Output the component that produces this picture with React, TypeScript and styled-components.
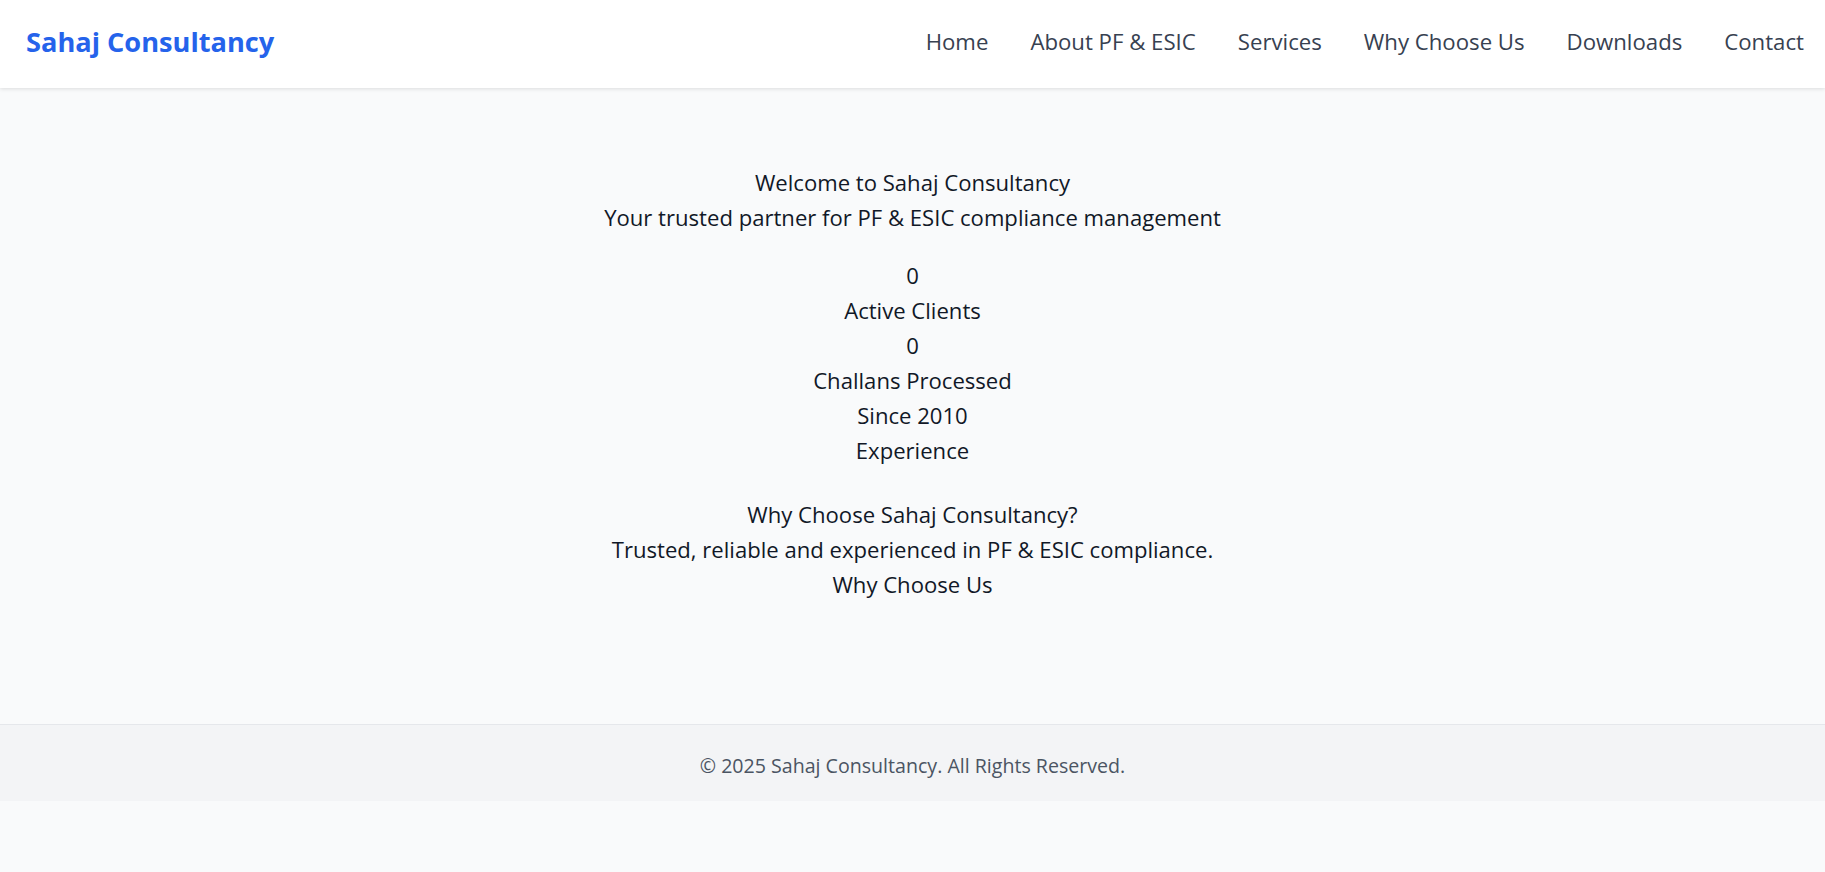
import React from 'react'
import styled, { createGlobalStyle } from 'styled-components'

const GlobalStyle = createGlobalStyle`
  html, body {
    margin: 0;
    padding: 0;
    background-color: #f9fafb;
    font-family: "Open Sans", "Noto Sans", sans-serif;
    color: #111827;
  }
  * {
    box-sizing: border-box;
  }
`

const navLinks = ['Home', 'About PF & ESIC', 'Services', 'Why Choose Us', 'Downloads', 'Contact']

const stats = [
  { value: '0', label: 'Active Clients' },
  { value: '0', label: 'Challans Processed' },
  { value: 'Since 2010', label: 'Experience' },
]

const App = () => {
  return (
    <>
      <GlobalStyle />
      <Header>
        <Logo>Sahaj Consultancy</Logo>
        <Nav>
          {navLinks.map((link) => (
            <NavLink key={link} href="#">{link}</NavLink>
          ))}
        </Nav>
      </Header>

      <Main>
        <Section>
          <Line>Welcome to Sahaj Consultancy</Line>
          <Line>Your trusted partner for PF &amp; ESIC compliance management</Line>
        </Section>

        <Section $gap={23}>
          {stats.map((s) => (
            <div key={s.label}>
              <Line>{s.value}</Line>
              <Line>{s.label}</Line>
            </div>
          ))}
        </Section>

        <Section $gap={29}>
          <Line>Why Choose Sahaj Consultancy?</Line>
          <Line>Trusted, reliable and experienced in PF &amp; ESIC compliance.</Line>
          <Line>Why Choose Us</Line>
        </Section>
      </Main>

      <Footer>
        <FooterText>&copy; 2025 Sahaj Consultancy. All Rights Reserved.</FooterText>
      </Footer>
    </>
  )
}

const Header = styled.header`
  height: 88px;
  display: flex;
  align-items: center;
  justify-content: space-between;
  padding: 0 21px 5px 26px;
  background-color: #ffffff;
  box-shadow: 0 1px 4px rgba(0, 0, 0, 0.12);
  position: relative;
`

const Logo = styled.div`
  font-size: 27.2px;
  font-weight: 700;
  color: #2563eb;
`

const Nav = styled.nav`
  display: flex;
  align-items: center;
  gap: 42px;
`

const NavLink = styled.a`
  font-size: 22.2px;
  color: #374151;
  text-decoration: none;
`

const Main = styled.main`
  padding: 77px 0 122px;
  text-align: center;
`

const Section = styled.section<{ $gap?: number }>`
  margin-top: ${(p) => p.$gap || 0}px;
`

const Line = styled.p`
  margin: 0;
  font-size: 22.1px;
  line-height: 35px;
`

const Footer = styled.footer`
  height: 77px;
  display: flex;
  align-items: center;
  justify-content: center;
  padding-top: 4px;
  background-color: #f3f4f6;
  border-top: 1px solid #e5e7eb;
`

const FooterText = styled.p`
  margin: 0;
  font-size: 19.6px;
  color: #4b5563;
`

export default App
